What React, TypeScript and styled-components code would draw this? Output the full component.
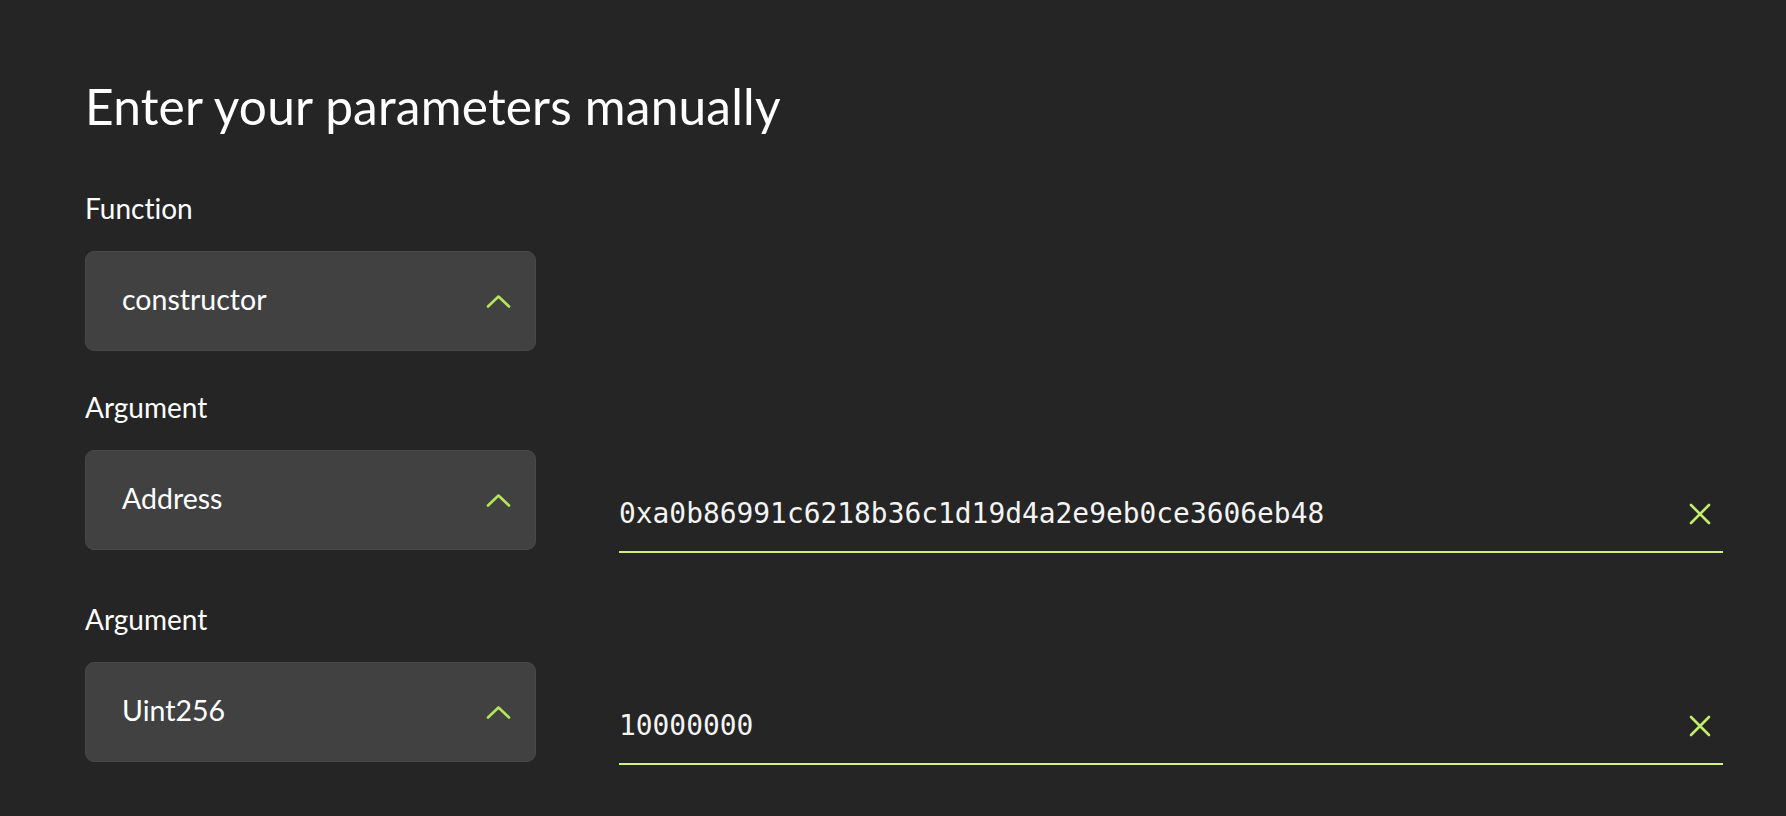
import styled, { createGlobalStyle } from "styled-components";

const GlobalStyle = createGlobalStyle`
    html, body {
        margin: 0;
        padding: 0;
        background: #252525;
    }
`;

const Page = styled.main`
    min-height: 100vh;
    box-sizing: border-box;
    padding: 76px 63px 40px 85px;
    background: #252525;
    color: #ffffff;
    font-family: Lato, "Noto Sans", sans-serif;
    font-variant-ligatures: none;
`;

const Title = styled.h1`
    margin: 0 0 55px;
    font-size: 49.6px;
    font-weight: 400;
    line-height: 60px;
    letter-spacing: 0.2px;
`;

const Field = styled.section`
    display: flex;
    flex-direction: column;
    margin-bottom: 39px;
`;

const Label = styled.div`
    font-size: 28px;
    line-height: 34px;
    margin-bottom: 26px;
`;

const Row = styled.div`
    display: flex;
    align-items: flex-start;
    gap: 83px;
`;

const Select = styled.button`
    all: unset;
    box-sizing: border-box;
    width: 451px;
    height: 100px;
    flex-shrink: 0;
    display: flex;
    align-items: center;
    justify-content: space-between;
    padding: 0 24px 0 36px;
    border-radius: 9px;
    background: #414141;
    border: 1px solid #484848;
    color: #ffffff;
    font-family: Lato, "Noto Sans", sans-serif;
    font-variant-ligatures: none;
    font-size: 28.5px;
`;

const SelectText = styled.span`
    padding-bottom: 4px;
`;

const ValueInput = styled.div`
    flex: 1;
    box-sizing: border-box;
    height: 103px;
    margin-bottom: 10px;
    display: flex;
    align-items: center;
    justify-content: space-between;
    padding: 26px 12px 0 0;
    border-bottom: 2.5px solid #d2f07c;
`;

const Mono = styled.span`
    font-family: "DejaVu Sans Mono", "Liberation Mono", monospace;
    font-size: 27.9px;
    color: #f4f4f4;
`;

const Chevron = () => (
    <svg width="25" height="14" viewBox="0 0 25 14" fill="none">
        <path d="M2 12.5 L12.5 2.5 L23 12.5" stroke="#b5e35a" strokeWidth="2.6" strokeLinecap="round" strokeLinejoin="round" />
    </svg>
);

const Clear = () => (
    <svg width="22" height="22" viewBox="0 0 22 22" fill="none">
        <path d="M2 2 L20 20 M20 2 L2 20" stroke="#c4ec6a" strokeWidth="2.6" strokeLinecap="round" />
    </svg>
);

type Param = { label: string; type: string; value?: string };

const params: Param[] = [
    { label: "Function", type: "constructor" },
    { label: "Argument", type: "Address", value: "0xa0b86991c6218b36c1d19d4a2e9eb0ce3606eb48" },
    { label: "Argument", type: "Uint256", value: "10000000" },
];

const App = () => {
    return (
        <Page>
            <GlobalStyle />
            <Title>Enter your parameters manually</Title>
            {params.map((p, i) => (
                <Field key={i}>
                    <Label>{p.label}</Label>
                    <Row>
                        <Select>
                            <SelectText>{p.type}</SelectText>
                            <Chevron />
                        </Select>
                        {p.value !== undefined && (
                            <ValueInput>
                                <Mono>{p.value}</Mono>
                                <Clear />
                            </ValueInput>
                        )}
                    </Row>
                </Field>
            ))}
        </Page>
    );
};

export default App;
